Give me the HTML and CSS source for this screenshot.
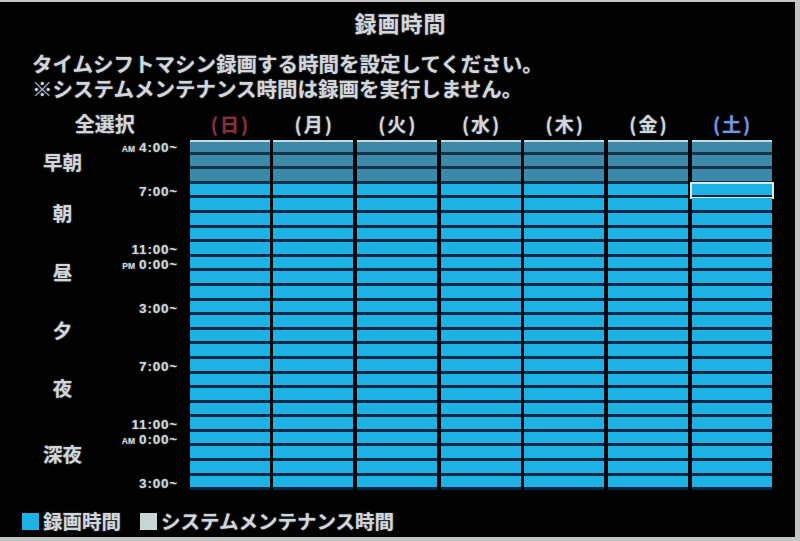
FILE: index.html
```html
<!DOCTYPE html>
<html lang="ja">
<head>
<meta charset="utf-8">
<title>録画時間</title>
<link rel="stylesheet" href="styles.css">
</head>
<body>
<div class="screen">
  <div class="title">録画時間</div>
  <div class="desc">
    <p>タイムシフトマシン録画する時間を設定してください。</p>
    <p>※システムメンテナンス時間は録画を実行しません。</p>
  </div>
  <div class="head">
    <div class="head-left">全選択</div>
    <div class="days">
      <div class="day sun">(日)</div>
      <div class="day">(月)</div>
      <div class="day">(火)</div>
      <div class="day">(水)</div>
      <div class="day">(木)</div>
      <div class="day">(金)</div>
      <div class="day sat">(土)</div>
    </div>
  </div>
  <div class="table">
    <div class="labels">
      <div class="period p1">早朝</div>
      <div class="period p2">朝</div>
      <div class="period p3">昼</div>
      <div class="period p4">夕</div>
      <div class="period p5">夜</div>
      <div class="period p6">深夜</div>
      <div class="time t1"><span class="ap">AM</span>4:00~</div>
      <div class="time t2">7:00~</div>
      <div class="time t3">11:00~</div>
      <div class="time t4"><span class="ap">PM</span>0:00~</div>
      <div class="time t5">3:00~</div>
      <div class="time t6">7:00~</div>
      <div class="time t7">11:00~</div>
      <div class="time t8"><span class="ap">AM</span>0:00~</div>
      <div class="time t9">3:00~</div>
    </div>
    <div class="cols">
      <div class="col">
        <i class="c m top"></i><i class="c m"></i><i class="c m"></i>
        <i class="c"></i><i class="c"></i><i class="c"></i><i class="c"></i><i class="c"></i><i class="c"></i><i class="c"></i>
        <i class="c"></i><i class="c"></i><i class="c"></i><i class="c"></i><i class="c"></i><i class="c"></i><i class="c"></i>
        <i class="c"></i><i class="c"></i><i class="c"></i><i class="c"></i><i class="c"></i><i class="c"></i><i class="c"></i>
      </div>
      <div class="col">
        <i class="c m top"></i><i class="c m"></i><i class="c m"></i>
        <i class="c"></i><i class="c"></i><i class="c"></i><i class="c"></i><i class="c"></i><i class="c"></i><i class="c"></i>
        <i class="c"></i><i class="c"></i><i class="c"></i><i class="c"></i><i class="c"></i><i class="c"></i><i class="c"></i>
        <i class="c"></i><i class="c"></i><i class="c"></i><i class="c"></i><i class="c"></i><i class="c"></i><i class="c"></i>
      </div>
      <div class="col">
        <i class="c m top"></i><i class="c m"></i><i class="c m"></i>
        <i class="c"></i><i class="c"></i><i class="c"></i><i class="c"></i><i class="c"></i><i class="c"></i><i class="c"></i>
        <i class="c"></i><i class="c"></i><i class="c"></i><i class="c"></i><i class="c"></i><i class="c"></i><i class="c"></i>
        <i class="c"></i><i class="c"></i><i class="c"></i><i class="c"></i><i class="c"></i><i class="c"></i><i class="c"></i>
      </div>
      <div class="col">
        <i class="c m top"></i><i class="c m"></i><i class="c m"></i>
        <i class="c"></i><i class="c"></i><i class="c"></i><i class="c"></i><i class="c"></i><i class="c"></i><i class="c"></i>
        <i class="c"></i><i class="c"></i><i class="c"></i><i class="c"></i><i class="c"></i><i class="c"></i><i class="c"></i>
        <i class="c"></i><i class="c"></i><i class="c"></i><i class="c"></i><i class="c"></i><i class="c"></i><i class="c"></i>
      </div>
      <div class="col">
        <i class="c m top"></i><i class="c m"></i><i class="c m"></i>
        <i class="c"></i><i class="c"></i><i class="c"></i><i class="c"></i><i class="c"></i><i class="c"></i><i class="c"></i>
        <i class="c"></i><i class="c"></i><i class="c"></i><i class="c"></i><i class="c"></i><i class="c"></i><i class="c"></i>
        <i class="c"></i><i class="c"></i><i class="c"></i><i class="c"></i><i class="c"></i><i class="c"></i><i class="c"></i>
      </div>
      <div class="col">
        <i class="c m top"></i><i class="c m"></i><i class="c m"></i>
        <i class="c"></i><i class="c"></i><i class="c"></i><i class="c"></i><i class="c"></i><i class="c"></i><i class="c"></i>
        <i class="c"></i><i class="c"></i><i class="c"></i><i class="c"></i><i class="c"></i><i class="c"></i><i class="c"></i>
        <i class="c"></i><i class="c"></i><i class="c"></i><i class="c"></i><i class="c"></i><i class="c"></i><i class="c"></i>
      </div>
      <div class="col">
        <i class="c m top"></i><i class="c m"></i><i class="c m"></i>
        <i class="c sel"></i><i class="c"></i><i class="c"></i><i class="c"></i><i class="c"></i><i class="c"></i><i class="c"></i>
        <i class="c"></i><i class="c"></i><i class="c"></i><i class="c"></i><i class="c"></i><i class="c"></i><i class="c"></i>
        <i class="c"></i><i class="c"></i><i class="c"></i><i class="c"></i><i class="c"></i><i class="c"></i><i class="c"></i>
      </div>
    </div>
  </div>
  <div class="legend">
    <span class="sw rec"></span><span class="lt">録画時間</span>
    <span class="sw mnt"></span><span class="lt">システムメンテナンス時間</span>
  </div>
</div>
</body>
</html>
```

FILE: styles.css
```css
html, body {
  margin: 0;
  padding: 0;
}
body {
  width: 800px;
  height: 541px;
  overflow: hidden;
  background: #c3c7c4;
  font-family: "Noto Sans CJK JP", "Noto Sans", sans-serif;
}
.screen {
  width: 795px;
  height: 535px;
  margin-top: 2px;
  background: #020203;
  color: #d3d7db;
  text-shadow: 0 0 2px rgba(190, 205, 220, 0.55);
  font-weight: 700;
  overflow: hidden;
}
.title {
  height: 40px;
  line-height: 40px;
  text-align: center;
  font-size: 22px;
  letter-spacing: 1px;
  padding-left: 6px;
}
.desc {
  margin-top: 8.5px;
  padding-left: 32px;
  font-size: 20.5px;
  line-height: 25px;
}
.desc p {
  margin: 0;
  height: 25px;
  white-space: nowrap;
}
.head {
  display: flex;
  height: 28px;
  margin-top: 9.5px;
  line-height: 28px;
}
.head-left {
  width: 169.5px;
  padding-left: 20px;
  text-align: center;
  font-size: 20px;
}
.days {
  display: flex;
  gap: 3.7px;
}
.day {
  width: 80px;
  text-align: center;
  font-size: 19px;
  letter-spacing: 2px;
  padding-left: 2px;
  box-sizing: border-box;
}
.day.sun {
  color: #86303f;
  text-shadow: 0 0 2px rgba(140, 50, 70, 0.5);
}
.day.sat {
  color: #7596e0;
  text-shadow: 0 0 2px rgba(110, 140, 220, 0.5);
}
.table {
  display: flex;
  margin-top: 2px;
  height: 350.4px;
}
.labels {
  width: 189.5px;
  display: grid;
  grid-template-columns: 117px 61px;
  grid-template-rows: repeat(24, 14.6px);
}
.period {
  grid-column: 1;
  align-self: center;
  padding-left: 8px;
  text-align: center;
  font-size: 19.5px;
  line-height: 1;
}
.p1 { grid-row: 1 / 4; }
.p2 { grid-row: 4 / 8; }
.p3 { grid-row: 8 / 12; }
.p4 { grid-row: 12 / 16; }
.p5 { grid-row: 16 / 20; }
.p6 { grid-row: 20 / 25; }
.time {
  grid-column: 2;
  text-align: right;
  white-space: nowrap;
  font-family: "Liberation Sans", Arial, sans-serif;
  font-size: 13.5px;
  letter-spacing: 0.8px;
  line-height: 15px;
}
.ap {
  font-size: 8.5px;
  margin-right: 4px;
  letter-spacing: 0;
}
.t1 { grid-row: 1; }
.t2 { grid-row: 4; }
.t3 { grid-row: 8; }
.t4 { grid-row: 9; }
.t5 { grid-row: 12; }
.t6 { grid-row: 16; }
.t7 { grid-row: 20; }
.t8 { grid-row: 21; }
.t9 { grid-row: 24; }
.cols {
  display: flex;
  gap: 3.7px;
  background: #020406;
}
.col {
  width: 80px;
  display: flex;
  flex-direction: column;
}
.c {
  display: block;
  height: 14.6px;
  box-sizing: border-box;
  background: #1eb1e4;
  border-bottom: 3px solid #0b2748;
  position: relative;
}
.c.m {
  background: #3c89a8;
  border-bottom-color: #17324a;
}
.c.top {
  border-top: 2.4px solid #c6dbe3;
}
.c.sel::after {
  content: "";
  position: absolute;
  left: -2px;
  right: -2px;
  top: -2px;
  bottom: -4px;
  border: 2px solid #d8eaee;
}
.legend {
  display: flex;
  align-items: center;
  height: 22px;
  margin-top: 20px;
  padding-left: 22px;
  font-size: 19.5px;
}
.sw {
  width: 17px;
  height: 17px;
  margin-right: 4px;
}
.sw.rec {
  background: #1eb1e4;
}
.sw.mnt {
  background: #c9d6d6;
  margin-left: 19px;
}
.lt {
  line-height: 22px;
  white-space: nowrap;
}
```
